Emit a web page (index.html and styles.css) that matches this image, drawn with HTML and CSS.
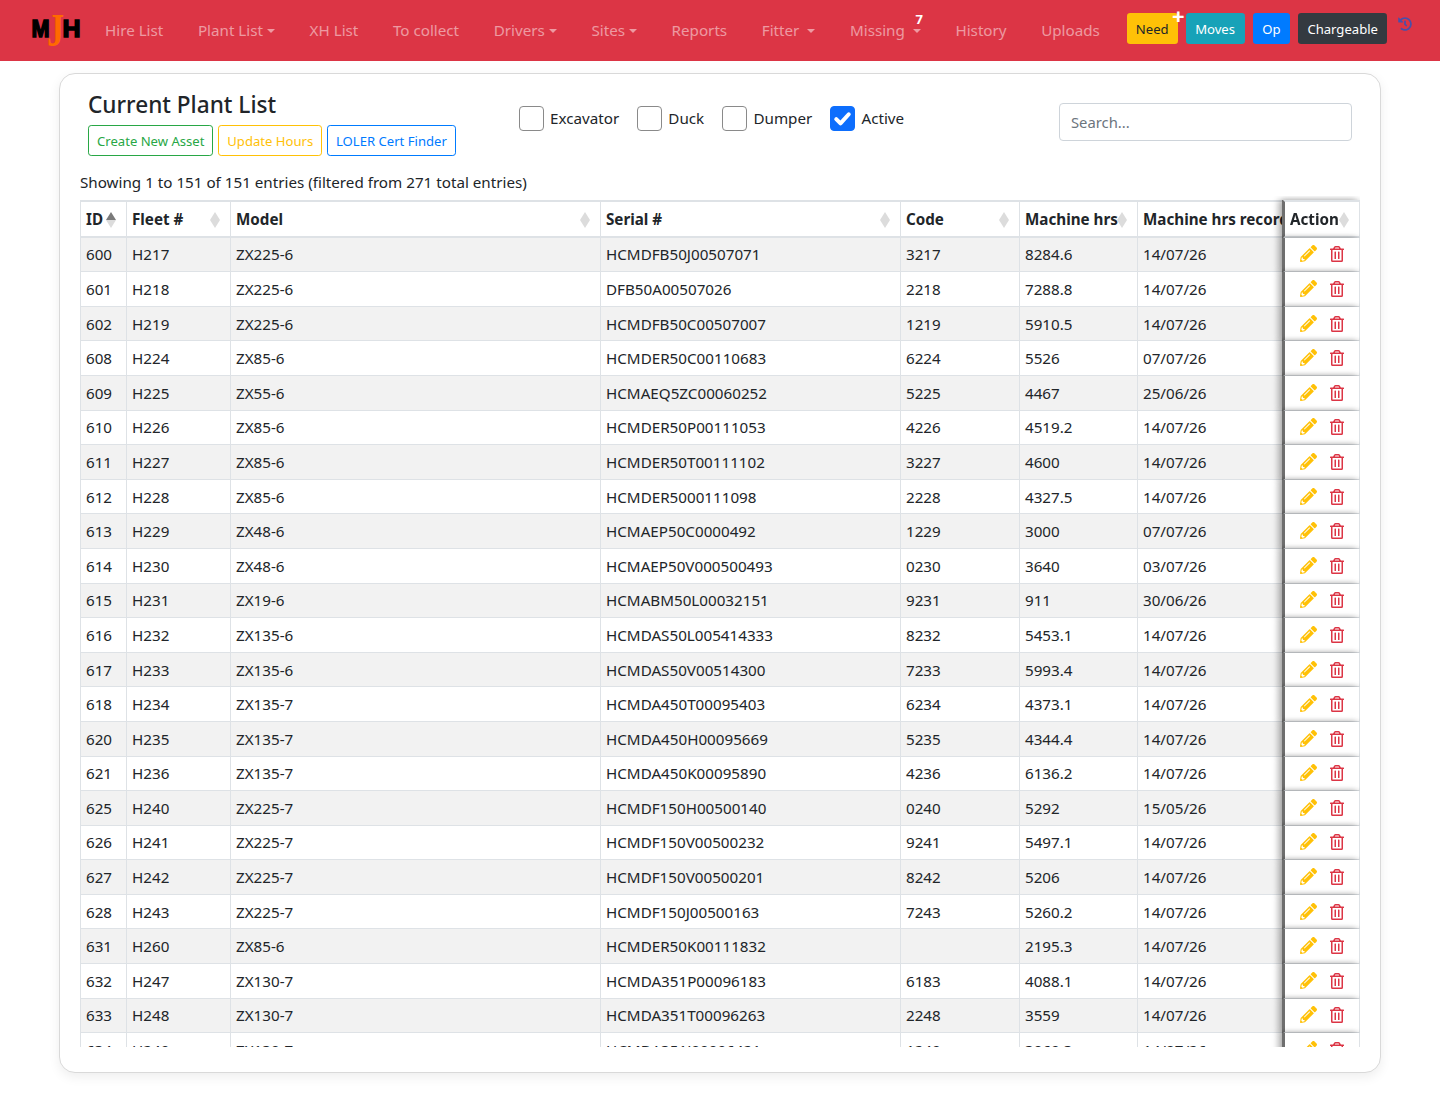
FILE: index.html
```html
<!DOCTYPE html>
<html lang="en">
<head>
<meta charset="utf-8">
<title>Current Plant List</title>
<link rel="stylesheet" href="styles.css">
</head>
<body>
<svg class="defs" aria-hidden="true">
<symbol id="pencil" viewBox="0 0 512 512"><path d="M497.9 142.1l-46.1 46.1c-4.7 4.7-12.3 4.7-17 0l-111-111c-4.7-4.7-4.7-12.3 0-17l46.1-46.1c18.7-18.7 49.1-18.7 67.9 0l60.1 60.1c18.8 18.7 18.8 49.1 0 67.9zM284.2 99.8L21.6 362.4.4 483.9c-2.9 16.4 11.4 30.6 27.8 27.8l121.5-21.3 262.6-262.6c4.7-4.7 4.7-12.3 0-17l-111-111c-4.8-4.7-12.4-4.7-17.1 0zM124.1 339.9c-5.5-5.5-5.5-14.3 0-19.8l154-154c5.5-5.5 14.3-5.5 19.8 0s5.5 14.3 0 19.8l-154 154c-5.5 5.5-14.3 5.5-19.8 0zM88 424h48v36.3l-64.5 11.3-31.1-31.1L51.7 376H88v48z"/></symbol>
<symbol id="trash" viewBox="0 0 448 512"><path d="M268 416h24a12 12 0 0 0 12-12V188a12 12 0 0 0-12-12h-24a12 12 0 0 0-12 12v216a12 12 0 0 0 12 12zM432 80h-82.41l-34-56.7A48 48 0 0 0 274.41 0H173.59a48 48 0 0 0-41.16 23.3L98.41 80H16A16 16 0 0 0 0 96v16a16 16 0 0 0 16 16h16v336a48 48 0 0 0 48 48h288a48 48 0 0 0 48-48V128h16a16 16 0 0 0 16-16V96a16 16 0 0 0-16-16zM171.84 50.91A6 6 0 0 1 177 48h94a6 6 0 0 1 5.15 2.91L293.61 80H154.39zM368 464H80V128h288zm-212-48h24a12 12 0 0 0 12-12V188a12 12 0 0 0-12-12h-24a12 12 0 0 0-12 12v216a12 12 0 0 0 12 12z"/></symbol>
</svg>
<nav class="navbar">
  <a class="brand" href="#" aria-label="MJH">
    <svg width="52" height="40" viewBox="0 0 52 40">
      <text class="logo-j" x="16" y="35" textLength="17" lengthAdjust="spacingAndGlyphs">J</text>
      <text class="logo-m" x="0.5" y="26" textLength="18" lengthAdjust="spacingAndGlyphs">M</text>
      <text class="logo-m" x="31.5" y="26" textLength="18" lengthAdjust="spacingAndGlyphs">H</text>
    </svg>
  </a>
  <ul class="nav-links">
    <li><a href="#">Hire List</a></li>
    <li><a href="#" class="caret">Plant List</a></li>
    <li><a href="#">XH List</a></li>
    <li><a href="#">To collect</a></li>
    <li><a href="#" class="caret">Drivers</a></li>
    <li><a href="#" class="caret">Sites</a></li>
    <li><a href="#">Reports</a></li>
    <li><a href="#" class="caret wide">Fitter</a></li>
    <li class="missing"><a href="#" class="caret wide">Missing</a><span class="count">7</span></li>
    <li><a href="#">History</a></li>
    <li><a href="#">Uploads</a></li>
  </ul>
  <div class="nav-btns">
    <a class="btn btn-need" href="#">Need<span class="plus">+</span></a>
    <a class="btn btn-moves" href="#">Moves</a>
    <a class="btn btn-op" href="#">Op</a>
    <a class="btn btn-charge" href="#">Chargeable</a>
    <svg class="history" viewBox="0 0 512 512"><path d="M504 255.531c.253 136.64-111.18 248.372-247.82 248.468-59.015.042-113.223-20.53-155.822-54.911-11.077-8.94-11.905-25.541-1.839-35.607l11.267-11.267c8.609-8.609 22.353-9.551 31.891-1.984C173.062 425.135 212.781 440 256 440c101.705 0 184-82.311 184-184 0-101.705-82.311-184-184-184-48.814 0-93.149 18.969-126.068 49.932l50.754 50.754c10.08 10.08 2.941 27.314-11.313 27.314H24c-8.837 0-16-7.163-16-16V38.627c0-14.254 17.234-21.393 27.314-11.314l49.372 49.372C129.209 34.136 189.552 8 256 8c136.81 0 247.747 110.78 248 247.531zm-180.912 78.784l9.823-12.63c8.138-10.463 6.253-25.542-4.21-33.679L288 256.349V152c0-13.255-10.745-24-24-24h-16c-13.255 0-24 10.745-24 24v135.651l65.409 50.874c10.463 8.137 25.541 6.253 33.679-4.21z"/></svg>
  </div>
</nav>
<main class="card">
  <header class="card-head">
    <div class="title-block">
      <h3>Current Plant List</h3>
      <div class="actions">
        <a class="btn btn-o-green" href="#">Create New Asset</a>
        <a class="btn btn-o-yellow" href="#">Update Hours</a>
        <a class="btn btn-o-blue" href="#">LOLER Cert Finder</a>
      </div>
    </div>
    <div class="filters">
      <label class="check"><span class="box"></span>Excavator</label>
      <label class="check"><span class="box"></span>Duck</label>
      <label class="check"><span class="box"></span>Dumper</label>
      <label class="check"><span class="box on"><svg viewBox="0 0 20 20" width="25" height="25"><path d="M5 10.5l3.4 3.4L15 6.6" fill="none" stroke="#fff" stroke-width="3.2" stroke-linecap="round" stroke-linejoin="round"/></svg></span>Active</label>
    </div>
    <input class="search" type="text" placeholder="Search...">
  </header>
  <p class="info">Showing 1 to 151 of 151 entries (filtered from 271 total entries)</p>
  <div class="table-wrap">
    <table class="plant">
      <colgroup>
        <col class="c-id"><col class="c-fleet"><col class="c-model"><col class="c-serial"><col class="c-code"><col class="c-hrs"><col class="c-rec"><col class="c-act">
      </colgroup>
      <thead>
        <tr>
          <th class="sort asc">ID</th><th class="sort">Fleet #</th><th class="sort">Model</th><th class="sort">Serial #</th><th class="sort">Code</th><th class="sort">Machine hrs</th><th class="rec">Machine hrs recorded</th><th class="sort act">Action</th>
        </tr>
      </thead>
      <tbody>
        <tr><td>600</td><td>H217</td><td>ZX225-6</td><td>HCMDFB50J00507071</td><td>3217</td><td>8284.6</td><td>14/07/26</td><td class="act"><svg class="i-pen"><use href="#pencil"/></svg><svg class="i-bin"><use href="#trash"/></svg></td></tr>
        <tr><td>601</td><td>H218</td><td>ZX225-6</td><td>DFB50A00507026</td><td>2218</td><td>7288.8</td><td>14/07/26</td><td class="act"><svg class="i-pen"><use href="#pencil"/></svg><svg class="i-bin"><use href="#trash"/></svg></td></tr>
        <tr><td>602</td><td>H219</td><td>ZX225-6</td><td>HCMDFB50C00507007</td><td>1219</td><td>5910.5</td><td>14/07/26</td><td class="act"><svg class="i-pen"><use href="#pencil"/></svg><svg class="i-bin"><use href="#trash"/></svg></td></tr>
        <tr><td>608</td><td>H224</td><td>ZX85-6</td><td>HCMDER50C00110683</td><td>6224</td><td>5526</td><td>07/07/26</td><td class="act"><svg class="i-pen"><use href="#pencil"/></svg><svg class="i-bin"><use href="#trash"/></svg></td></tr>
        <tr><td>609</td><td>H225</td><td>ZX55-6</td><td>HCMAEQ5ZC00060252</td><td>5225</td><td>4467</td><td>25/06/26</td><td class="act"><svg class="i-pen"><use href="#pencil"/></svg><svg class="i-bin"><use href="#trash"/></svg></td></tr>
        <tr><td>610</td><td>H226</td><td>ZX85-6</td><td>HCMDER50P00111053</td><td>4226</td><td>4519.2</td><td>14/07/26</td><td class="act"><svg class="i-pen"><use href="#pencil"/></svg><svg class="i-bin"><use href="#trash"/></svg></td></tr>
        <tr><td>611</td><td>H227</td><td>ZX85-6</td><td>HCMDER50T00111102</td><td>3227</td><td>4600</td><td>14/07/26</td><td class="act"><svg class="i-pen"><use href="#pencil"/></svg><svg class="i-bin"><use href="#trash"/></svg></td></tr>
        <tr><td>612</td><td>H228</td><td>ZX85-6</td><td>HCMDER5000111098</td><td>2228</td><td>4327.5</td><td>14/07/26</td><td class="act"><svg class="i-pen"><use href="#pencil"/></svg><svg class="i-bin"><use href="#trash"/></svg></td></tr>
        <tr><td>613</td><td>H229</td><td>ZX48-6</td><td>HCMAEP50C0000492</td><td>1229</td><td>3000</td><td>07/07/26</td><td class="act"><svg class="i-pen"><use href="#pencil"/></svg><svg class="i-bin"><use href="#trash"/></svg></td></tr>
        <tr><td>614</td><td>H230</td><td>ZX48-6</td><td>HCMAEP50V000500493</td><td>0230</td><td>3640</td><td>03/07/26</td><td class="act"><svg class="i-pen"><use href="#pencil"/></svg><svg class="i-bin"><use href="#trash"/></svg></td></tr>
        <tr><td>615</td><td>H231</td><td>ZX19-6</td><td>HCMABM50L00032151</td><td>9231</td><td>911</td><td>30/06/26</td><td class="act"><svg class="i-pen"><use href="#pencil"/></svg><svg class="i-bin"><use href="#trash"/></svg></td></tr>
        <tr><td>616</td><td>H232</td><td>ZX135-6</td><td>HCMDAS50L005414333</td><td>8232</td><td>5453.1</td><td>14/07/26</td><td class="act"><svg class="i-pen"><use href="#pencil"/></svg><svg class="i-bin"><use href="#trash"/></svg></td></tr>
        <tr><td>617</td><td>H233</td><td>ZX135-6</td><td>HCMDAS50V00514300</td><td>7233</td><td>5993.4</td><td>14/07/26</td><td class="act"><svg class="i-pen"><use href="#pencil"/></svg><svg class="i-bin"><use href="#trash"/></svg></td></tr>
        <tr><td>618</td><td>H234</td><td>ZX135-7</td><td>HCMDA450T00095403</td><td>6234</td><td>4373.1</td><td>14/07/26</td><td class="act"><svg class="i-pen"><use href="#pencil"/></svg><svg class="i-bin"><use href="#trash"/></svg></td></tr>
        <tr><td>620</td><td>H235</td><td>ZX135-7</td><td>HCMDA450H00095669</td><td>5235</td><td>4344.4</td><td>14/07/26</td><td class="act"><svg class="i-pen"><use href="#pencil"/></svg><svg class="i-bin"><use href="#trash"/></svg></td></tr>
        <tr><td>621</td><td>H236</td><td>ZX135-7</td><td>HCMDA450K00095890</td><td>4236</td><td>6136.2</td><td>14/07/26</td><td class="act"><svg class="i-pen"><use href="#pencil"/></svg><svg class="i-bin"><use href="#trash"/></svg></td></tr>
        <tr><td>625</td><td>H240</td><td>ZX225-7</td><td>HCMDF150H00500140</td><td>0240</td><td>5292</td><td>15/05/26</td><td class="act"><svg class="i-pen"><use href="#pencil"/></svg><svg class="i-bin"><use href="#trash"/></svg></td></tr>
        <tr><td>626</td><td>H241</td><td>ZX225-7</td><td>HCMDF150V00500232</td><td>9241</td><td>5497.1</td><td>14/07/26</td><td class="act"><svg class="i-pen"><use href="#pencil"/></svg><svg class="i-bin"><use href="#trash"/></svg></td></tr>
        <tr><td>627</td><td>H242</td><td>ZX225-7</td><td>HCMDF150V00500201</td><td>8242</td><td>5206</td><td>14/07/26</td><td class="act"><svg class="i-pen"><use href="#pencil"/></svg><svg class="i-bin"><use href="#trash"/></svg></td></tr>
        <tr><td>628</td><td>H243</td><td>ZX225-7</td><td>HCMDF150J00500163</td><td>7243</td><td>5260.2</td><td>14/07/26</td><td class="act"><svg class="i-pen"><use href="#pencil"/></svg><svg class="i-bin"><use href="#trash"/></svg></td></tr>
        <tr><td>631</td><td>H260</td><td>ZX85-6</td><td>HCMDER50K00111832</td><td></td><td>2195.3</td><td>14/07/26</td><td class="act"><svg class="i-pen"><use href="#pencil"/></svg><svg class="i-bin"><use href="#trash"/></svg></td></tr>
        <tr><td>632</td><td>H247</td><td>ZX130-7</td><td>HCMDA351P00096183</td><td>6183</td><td>4088.1</td><td>14/07/26</td><td class="act"><svg class="i-pen"><use href="#pencil"/></svg><svg class="i-bin"><use href="#trash"/></svg></td></tr>
        <tr><td>633</td><td>H248</td><td>ZX130-7</td><td>HCMDA351T00096263</td><td>2248</td><td>3559</td><td>14/07/26</td><td class="act"><svg class="i-pen"><use href="#pencil"/></svg><svg class="i-bin"><use href="#trash"/></svg></td></tr>
        <tr><td>634</td><td>H249</td><td>ZX130-7</td><td>HCMDA351J00096421</td><td>1249</td><td>3069.3</td><td>14/07/26</td><td class="act"><svg class="i-pen"><use href="#pencil"/></svg><svg class="i-bin"><use href="#trash"/></svg></td></tr>
      </tbody>
    </table>
  </div>
</main>
</body>
</html>
```
FILE: styles.css
```css
* { box-sizing: border-box; }
html, body { margin: 0; padding: 0; }
body {
  font-family: "Noto Sans", "Open Sans", sans-serif;
  font-size: 15.2px;
  line-height: 24px;
  color: #212529;
  background: #fff;
  height: 1100px;
  overflow: hidden;
}
a { text-decoration: none; }
.defs { display: none; }

.navbar {
  height: 61px;
  background: #dc3545;
  display: flex;
  align-items: center;
  padding-left: 31px;
}
.brand { display: block; width: 52px; height: 40px; margin-top: 1px; }
.brand svg { display: block; overflow: visible; }
.logo-m { font: 700 24px "Liberation Sans", sans-serif; fill: #000; stroke: #000; stroke-width: 1.5px; }
.logo-j { font: 700 47px "Liberation Serif", serif; fill: #ff6a00; }
.nav-links {
  list-style: none;
  margin: 0 0 2px 22px;
  padding: 0;
  display: flex;
  gap: 34.6px;
}
.nav-links li { position: relative; }
.nav-links a { color: rgba(255,255,255,.5); }
.caret::after {
  content: "";
  display: inline-block;
  margin-left: 4px;
  vertical-align: 3px;
  border-top: 4.8px solid;
  border-left: 4.8px solid transparent;
  border-right: 4.8px solid transparent;
}
.caret.wide::after { margin-left: 8px; }
.count {
  position: absolute;
  right: -2px;
  top: -7px;
  color: #fff;
  font-weight: 700;
  font-size: 13px;
  line-height: 16px;
}
.nav-btns { margin: 0 0 4px 27px; display: flex; gap: 8px; align-items: center; position: relative; }
.btn {
  display: inline-block;
  height: 31px;
  padding: 0 8px;
  font-size: 13.1px;
  line-height: 30px;
  border: 1px solid transparent;
  border-radius: 3.2px;
  white-space: nowrap;
}
.btn-need { background: #ffc107; color: #212529; position: relative; }
.btn-moves { background: #17a2b8; color: #fff; padding: 0 8.5px; }
.btn-op { background: #007bff; color: #fff; padding: 0 8.8px; }
.btn-charge { background: #343a40; color: #fff; }
.plus {
  position: absolute;
  right: -8px;
  top: -11px;
  color: #fff;
  font-weight: 700;
  font-size: 22px;
  line-height: 24px;
}
.history { width: 14px; height: 14px; fill: #4a4fa8; margin: -10px 0 0 3px; }

.card {
  height: 1000px;
  margin: 12px 59px 0;
  padding: 16px 20px 25px;
  background: #fff;
  border: 1px solid #d9d9d9;
  border-radius: 16px;
  box-shadow: 0 4px 12px rgba(0,0,0,.07);
  display: flex;
  flex-direction: column;
}
.card-head { display: flex; align-items: flex-start; padding-left: 8px; }
.title-block { width: 431px; flex: none; }
h3 { margin: 0 0 5px; font-size: 22.6px; line-height: 30px; font-weight: 500; }
.actions { display: flex; gap: 4.8px; }
.btn-o-green { color: #28a745; border-color: #28a745; }
.btn-o-yellow { color: #ffc107; border-color: #ffc107; }
.btn-o-blue { color: #007bff; border-color: #007bff; }
.filters { display: flex; gap: 18.2px; padding-top: 16px; width: 540px; flex: none; }
.check { display: flex; align-items: flex-start; gap: 6px; height: 25px; }
.box {
  display: block;
  width: 25px;
  height: 25px;
  border: 1px solid #8a8a8a;
  border-radius: 4px;
  background: #fff;
}
.box.on { background: #0d6efd; border-color: #0d6efd; }
.box.on svg { display: block; margin: -1px; }
.search {
  width: 293px;
  height: 38px;
  margin-top: 13px;
  padding: 6px 11px;
  font: inherit;
  font-size: 14.8px;
  color: #495057;
  border: 1px solid #ced4da;
  border-radius: 4px;
  outline: none;
}
.search::placeholder { color: #6c757d; opacity: 1; }
.info { margin: 14px 0 2px; height: 24px; }

.table-wrap { flex: 1; min-height: 0; overflow: hidden; padding-top: 4px; }
.plant {
  width: 1280px;
  table-layout: fixed;
  border-collapse: separate;
  border-spacing: 0;
}
.c-id { width: 47px; }
.c-fleet { width: 104px; }
.c-model { width: 370px; }
.c-serial { width: 300px; }
.c-code { width: 119px; }
.c-hrs { width: 118px; }
.c-rec { width: 145px; }
.c-act { width: 77px; }
.plant th, .plant td {
  padding: 4.8px 5px;
  border-right: 1px solid #dee2e6;
  border-bottom: 1px solid #dee2e6;
  text-align: left;
  white-space: nowrap;
}
.plant th:first-child, .plant td:first-child { border-left: 1px solid #dee2e6; }
.plant th {
  position: relative;
  font-weight: 700;
  border-top: 2px solid #dee2e6;
  border-bottom-width: 2px;
}
.plant tbody tr:nth-child(odd) td { background: #f2f2f2; }
.sort::before, .sort::after {
  content: "";
  position: absolute;
  right: 10px;
  width: 0;
  height: 0;
  border-left: 5px solid transparent;
  border-right: 5px solid transparent;
}
.sort::before { top: 10px; border-bottom: 8px solid #dcdcdc; }
.sort::after { top: 18px; border-top: 8px solid #dcdcdc; }
.sort.asc::before { border-bottom-color: #7a7a7a; }
.plant th.act, .plant td.act {
  position: sticky;
  right: 0;
  z-index: 1;
  background: #fff;
  border-left: 2px solid #6e6e6e;
  box-shadow: -1px 0 0 #6e6e6e, -5px 0 6px rgba(0,0,0,.28), 0 -1px 5px rgba(0,0,0,.14);
}
.plant td.act { padding-left: 15px; }
.plant tbody tr:nth-child(odd) td.act { background: #fff; }
.i-pen { width: 17px; height: 17px; fill: #ffc107; vertical-align: -2px; }
.i-bin { width: 14px; height: 16px; fill: #dc3545; margin-left: 13px; vertical-align: -2px; }
```
